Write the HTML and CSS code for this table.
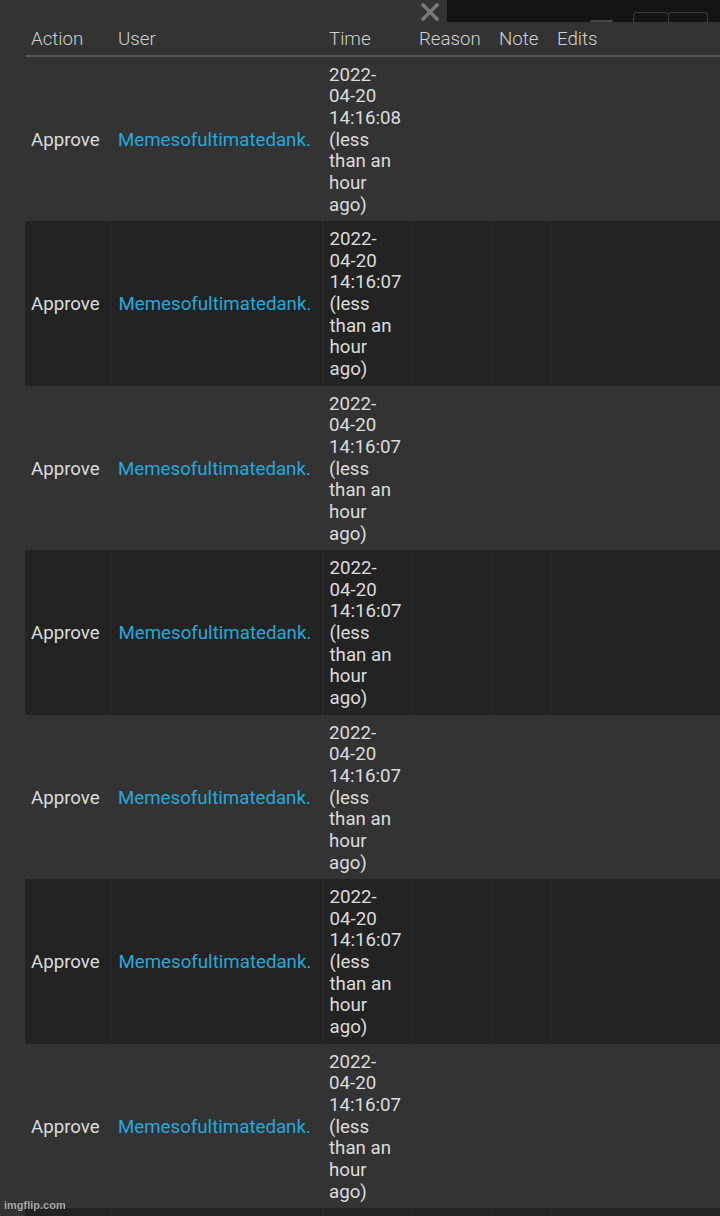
FILE: index.html
```html
<!DOCTYPE html>
<html lang="en">
<head>
    <meta charset="UTF-8">
    <meta name="viewport" content="width=device-width, initial-scale=1.0">
    <title>Mod Log</title>
    <link rel="stylesheet" href="styles.css">
</head>
<body>
    <div class="topbar">
        <div class="spacer"></div>
        <svg class="close" width="20" height="18" viewBox="0 0 20 18">
            <path d="M3 2 L17 16 M17 2 L3 16" stroke="#7a7a7a" stroke-width="3.4" stroke-linecap="square"/>
        </svg>
        <div class="panel">
            <span class="bump"></span>
            <span class="btn"></span>
            <span class="btn"></span>
        </div>
    </div>

    <table class="log">
        <thead>
            <tr>
                <th class="c-action">Action</th>
                <th class="c-user">User</th>
                <th class="c-time">Time</th>
                <th class="c-reason">Reason</th>
                <th class="c-note">Note</th>
                <th class="c-edits">Edits</th>
            </tr>
        </thead>
        <tbody>
            <tr>
                <td>Approve</td>
                <td><a href="#">Memesofultimatedank.</a></td>
                <td class="time">2022-<br>04-20<br>14:16:08<br>(less<br>than an<br>hour<br>ago)</td>
                <td></td><td></td><td></td>
            </tr>
            <tr>
                <td>Approve</td>
                <td><a href="#">Memesofultimatedank.</a></td>
                <td class="time">2022-<br>04-20<br>14:16:07<br>(less<br>than an<br>hour<br>ago)</td>
                <td></td><td></td><td></td>
            </tr>
            <tr>
                <td>Approve</td>
                <td><a href="#">Memesofultimatedank.</a></td>
                <td class="time">2022-<br>04-20<br>14:16:07<br>(less<br>than an<br>hour<br>ago)</td>
                <td></td><td></td><td></td>
            </tr>
            <tr>
                <td>Approve</td>
                <td><a href="#">Memesofultimatedank.</a></td>
                <td class="time">2022-<br>04-20<br>14:16:07<br>(less<br>than an<br>hour<br>ago)</td>
                <td></td><td></td><td></td>
            </tr>
            <tr>
                <td>Approve</td>
                <td><a href="#">Memesofultimatedank.</a></td>
                <td class="time">2022-<br>04-20<br>14:16:07<br>(less<br>than an<br>hour<br>ago)</td>
                <td></td><td></td><td></td>
            </tr>
            <tr>
                <td>Approve</td>
                <td><a href="#">Memesofultimatedank.</a></td>
                <td class="time">2022-<br>04-20<br>14:16:07<br>(less<br>than an<br>hour<br>ago)</td>
                <td></td><td></td><td></td>
            </tr>
            <tr>
                <td>Approve</td>
                <td><a href="#">Memesofultimatedank.</a></td>
                <td class="time">2022-<br>04-20<br>14:16:07<br>(less<br>than an<br>hour<br>ago)</td>
                <td></td><td></td><td></td>
            </tr>
            <tr class="more">
                <td></td><td></td><td></td><td></td><td></td><td></td>
            </tr>
        </tbody>
    </table>

    <div class="watermark">imgflip.com</div>
</body>
</html>
```

FILE: styles.css
```css
body {
    font-family: Roboto, "Noto Sans", sans-serif;
    background-color: #333333;
    color: #dcdcdc;
    margin: 0;
    padding: 0;
    overflow: hidden;
}

.topbar {
    display: flex;
    height: 22px;
    align-items: stretch;
}

.spacer {
    flex: 1;
}

.close {
    align-self: center;
    margin: 2px 7px 0 0;
}

.panel {
    flex: 0 0 273px;
    background-color: #141414;
    display: flex;
    align-items: flex-end;
}

.bump {
    width: 23px;
    height: 2px;
    margin-left: 143px;
    background-color: #474747;
    border-radius: 3px 3px 0 0;
}

.btn {
    width: 34px;
    height: 9px;
    border: 1px solid #3a3a3a;
    border-bottom: none;
    border-radius: 4px 4px 0 0;
}

.bump + .btn {
    margin-left: 20px;
}

.btn + .btn {
    width: 38px;
    margin-left: -1px;
}

.log {
    margin-left: 25px;
    width: 695px;
    border-collapse: collapse;
    table-layout: fixed;
    font-size: 18.7px;
}

.log th,
.log td {
    box-sizing: border-box;
}

.log th {
    font-weight: 300;
    text-align: left;
    color: #d2d2d2;
    height: 34px;
    padding: 0 7px;
    border-bottom: 2px solid #555555;
}

.log th.c-action { width: 85px; padding-left: 6px; }
.log th.c-user { width: 212px; padding-left: 8px; }
.log th.c-time { width: 90px; }
.log th.c-reason { width: 80px; }
.log th.c-note { width: 58px; }

.log td {
    padding: 7.6px 7px 5.2px;
    line-height: 21.67px;
    vertical-align: middle;
    white-space: nowrap;
}

.log td:first-child {
    padding-left: 6px;
}

.log td:nth-child(2) {
    padding-left: 8px;
}

.log tbody tr:nth-child(even) {
    background-color: #232323;
}

.log tbody tr:nth-child(even) td + td {
    border-left: 1px solid #2a2a2a;
}

.log tr.more td {
    height: 40px;
}

.log a {
    color: #25a8dc;
    text-decoration: none;
}

.watermark {
    position: fixed;
    left: 4px;
    top: 1199px;
    font-family: "Liberation Sans", Arial, sans-serif;
    font-weight: bold;
    font-size: 11px;
    color: #a8a8a8;
}
```
